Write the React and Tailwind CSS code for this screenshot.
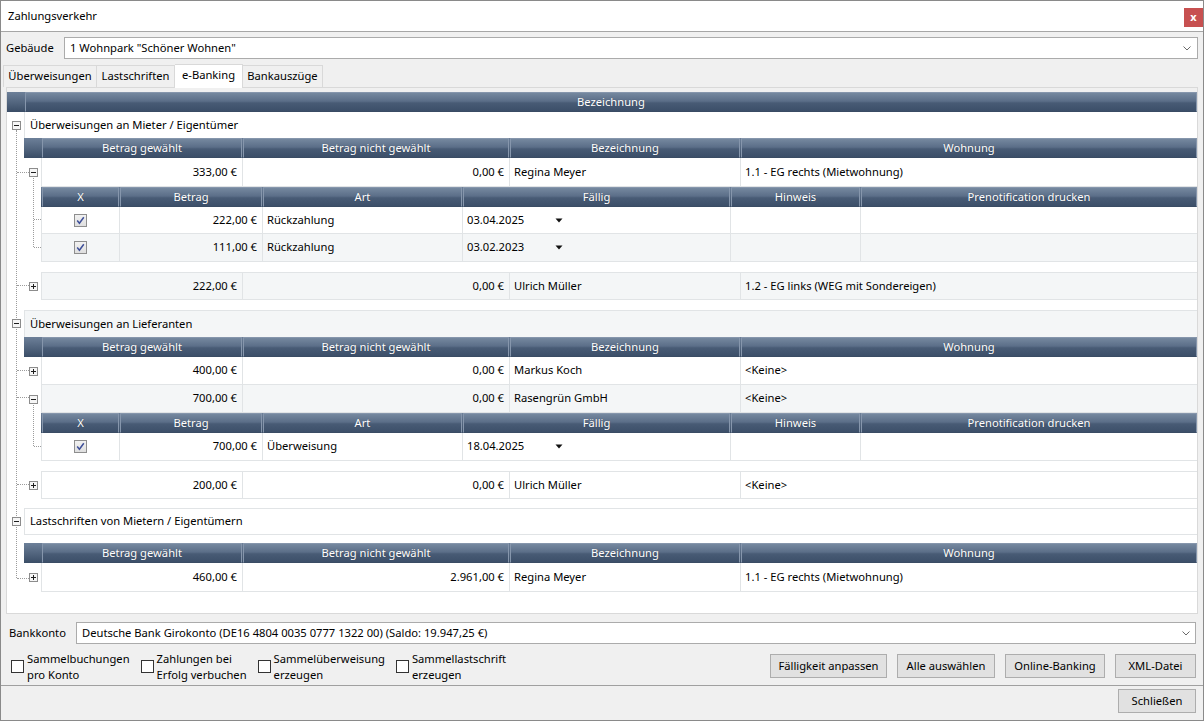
import React from "react";

const BORDER = "border-[#e1e4e6]";

const Exp = ({ plus }) => (
  <svg width="9" height="9" className="relative z-10 block">
    <rect x="0.5" y="0.5" width="8" height="8" fill="#f6f6f6" stroke="#8c8c8c" />
    <path d="M2 4.5h5" stroke="#1e1e1e" />
    {plus && <path d="M4.5 2v5" stroke="#1e1e1e" />}
  </svg>
);

const Check = () => (
  <svg width="13" height="13" className="block">
    <defs>
      <linearGradient id="cbg" x1="0" y1="0" x2="0" y2="1">
        <stop offset="0" stopColor="#f2f2f2" />
        <stop offset="1" stopColor="#dedede" />
      </linearGradient>
    </defs>
    <rect x="0.5" y="0.5" width="12" height="12" fill="url(#cbg)" stroke="#8e8e8e" />
    <path d="M3.2 6.6 L5.4 9.2 L9.8 3.2" fill="none" stroke="#3e4f98" strokeWidth="1.5" />
  </svg>
);

const Tri = () => (
  <svg width="8" height="5" className="block">
    <path d="M0.5 0.5 H7.5 L4 4.5 Z" fill="#111" />
  </svg>
);

const Chevron = () => (
  <svg width="8" height="5" className="block">
    <path d="M0.5 0.5 L4 4 L7.5 0.5" fill="none" stroke="#6a6a6a" strokeWidth="1" />
  </svg>
);

const HCell = ({ children, className = "" }) => (
  <div
    className={`ml-px flex items-center justify-center overflow-hidden whitespace-nowrap border border-[#8696ac] border-b-[#3a4c64] bg-[linear-gradient(to_bottom,#75889f_0%,#5b6e88_45%,#485b75_55%,#3c4f69_100%)] text-white [text-shadow:0_0_1px_rgba(0,0,0,0.35)] ${className}`}
  >
    {children}
  </div>
);

const BAR = "bg-[linear-gradient(to_bottom,#6d8099,#3a4d66)]";

const SectionHead = () => (
  <div className={`flex h-[20px] ${BAR}`}>
    <div className="w-[17px]" />
    <div className="flex-1 grid grid-cols-[201px_267px_231px_1fr]">
      <HCell>Betrag gewählt</HCell>
      <HCell>Betrag nicht gewählt</HCell>
      <HCell>Bezeichnung</HCell>
      <HCell>Wohnung</HCell>
    </div>
  </div>
);

const DetailHead = () => (
  <div className={`grid grid-cols-[78px_143px_200px_268px_130px_1fr] h-[20px] ${BAR}`}>
    <HCell>X</HCell>
    <HCell>Betrag</HCell>
    <HCell>Art</HCell>
    <HCell>Fällig</HCell>
    <HCell>Hinweis</HCell>
    <HCell>Prenotification drucken</HCell>
  </div>
);

const DataRow = ({ plus, a, b, name, wohnung, alt, top, h }) => (
  <div className={`flex ${h}`}>
    <div className="w-[17px] flex items-center justify-center pl-px">
      <Exp plus={plus} />
    </div>
    <div
      className={`flex-1 grid grid-cols-[201px_267px_231px_1fr] border-l border-b ${BORDER} ${top ? "border-t" : ""} ${alt ? "bg-[#f4f6f7]" : "bg-white"}`}
    >
      <div className={`border-r ${BORDER} flex items-center justify-end pr-[5px]`}>{a}</div>
      <div className={`border-r ${BORDER} flex items-center justify-end pr-[5px]`}>{b}</div>
      <div className={`border-r ${BORDER} flex items-center pl-[4px]`}>{name}</div>
      <div className="flex items-center pl-[4px]">{wohnung}</div>
    </div>
  </div>
);

const DetailRow = ({ amount, art, date, alt, h }) => (
  <div
    className={`grid grid-cols-[78px_143px_200px_268px_130px_1fr] border-l border-b ${BORDER} ${alt ? "bg-[#f4f6f7]" : "bg-white"} ${h}`}
  >
    <div className={`border-r ${BORDER} flex items-center justify-center`}>
      <Check />
    </div>
    <div className={`border-r ${BORDER} flex items-center justify-end pr-[5px]`}>{amount}</div>
    <div className={`border-r ${BORDER} flex items-center pl-[4px]`}>{art}</div>
    <div className={`border-r ${BORDER} flex items-center pl-[4px]`}>
      <span className="w-[88px]">{date}</span>
      <Tri />
    </div>
    <div className={`border-r ${BORDER}`} />
    <div />
  </div>
);

const GroupRow = ({ title, cls }) => (
  <div className={`flex ${cls}`}>
    <div className="w-[17px] flex items-center justify-center pl-px bg-white">
      <Exp />
    </div>
    <div className={`flex-1 flex items-center pl-[5px] ${BORDER}`}>{title}</div>
  </div>
);

const VLine = ({ cls }) => <div className={`absolute w-0 border-l border-dotted border-[#9c9c9c] ${cls}`} />;
const HLine = ({ cls }) => <div className={`absolute h-0 border-t border-dotted border-[#9c9c9c] ${cls}`} />;

const Cb = ({ l1, l2 }) => (
  <div className="flex items-start gap-[3px]">
    <div className="mt-[9px] w-[13px] h-[13px] border border-[#333333] bg-white shrink-0" />
    <div className="leading-[16px] whitespace-nowrap">
      {l1}
      <br />
      {l2}
    </div>
  </div>
);

const Btn = ({ children, w }) => (
  <div className={`h-[24px] ${w} flex items-center justify-center border border-[#adadad] bg-[#e1e1e1]`}>{children}</div>
);

export default function App() {
  return (
    <div className="w-[1204px] h-[721px] border border-[#8a8a8a] bg-[#f0f0f0] flex flex-col text-[11.2px] text-black font-['Segoe_UI','Noto_Sans',sans-serif] overflow-hidden">
      {/* Title bar */}
      <div className="h-[31px] shrink-0 bg-white border-b border-[#a6a6a6] flex items-start justify-between">
        <div className="pl-[7px] h-[30px] flex items-center">Zahlungsverkehr</div>
        <div className="mt-[7px] w-[19px] h-[19px] bg-[#c75050] flex items-center justify-center text-white text-[11px] font-bold leading-none pb-[2px]">
          x
        </div>
      </div>

      {/* Gebäude */}
      <div className="h-[32px] shrink-0 pt-[5px] pl-[5px] pr-[5px] flex">
        <div className="w-[58px] h-[22px] flex items-center">Gebäude</div>
        <div className="flex-1 h-[22px] border border-[#ababab] bg-white flex items-center justify-between pl-[5px] pr-[6px]">
          <span>1 Wohnpark "Schöner Wohnen"</span>
          <Chevron />
        </div>
      </div>

      {/* Tabs */}
      <div className="h-[23px] shrink-0 pl-[2px] flex items-end">
        <div className="w-[94px] h-[22px] border border-b-0 border-[#d9d9d9] flex items-center justify-center">Überweisungen</div>
        <div className="w-[78px] h-[22px] border border-l-0 border-b-0 border-[#d9d9d9] flex items-center justify-center">Lastschriften</div>
        <div className="relative z-10 -mb-px w-[68px] h-[24px] border border-l-0 border-b-0 border-[#d9d9d9] bg-white flex items-center justify-center pb-[2px]">
          e-Banking
        </div>
        <div className="w-[80px] h-[22px] border border-l-0 border-b-0 border-[#d9d9d9] flex items-center justify-center">Bankauszüge</div>
      </div>

      {/* Panel */}
      <div className="h-[527px] shrink-0 mx-[5px] border border-[#d9d9d9] flex flex-col">
        <div className="h-[4px] bg-[#f0f0f0] shrink-0" />
        <div className="relative flex-1 bg-white flex flex-col">
          {/* tree lines */}
          <VLine cls="left-[9px] top-[38px] h-[448px]" />
          <HLine cls="left-[10px] w-[12px] top-[80px]" />
          <HLine cls="left-[10px] w-[12px] top-[193px]" />
          <HLine cls="left-[10px] w-[12px] top-[278px]" />
          <HLine cls="left-[10px] w-[12px] top-[305px]" />
          <HLine cls="left-[10px] w-[12px] top-[392px]" />
          <HLine cls="left-[10px] w-[12px] top-[486px]" />
          <VLine cls="left-[26px] top-[86px] h-[69px]" />
          <HLine cls="left-[27px] w-[7px] top-[127px]" />
          <HLine cls="left-[27px] w-[7px] top-[155px]" />
          <VLine cls="left-[26px] top-[311px] h-[43px]" />
          <HLine cls="left-[27px] w-[7px] top-[354px]" />

          {/* top header */}
          <div className={`flex h-[20px] shrink-0 ${BAR}`}>
            <div className="w-[17px]" />
            <HCell className="flex-1">Bezeichnung</HCell>
          </div>

          {/* Group 1 */}
          <GroupRow title="Überweisungen an Mieter / Eigentümer" cls="h-[26px] [&>div:last-child]:border-l" />
          <div className="ml-[17px] flex flex-col">
            <SectionHead />
            <DataRow a="333,00 €" b="0,00 €" name="Regina Meyer" wohnung="1.1 - EG rechts (Mietwohnung)" h="h-[29px]" />
            <div className="ml-[17px] flex flex-col">
              <DetailHead />
              <DetailRow amount="222,00 €" art="Rückzahlung" date="03.04.2025" h="h-[27px]" />
              <DetailRow amount="111,00 €" art="Rückzahlung" date="03.02.2023" alt h="h-[28px]" />
            </div>
            <div className="h-[10px]" />
            <DataRow plus a="222,00 €" b="0,00 €" name="Ulrich Müller" wohnung="1.2 - EG links (WEG mit Sondereigen)" alt top h="h-[28px]" />
            <div className="h-[10px]" />
          </div>

          {/* Group 2 */}
          <GroupRow
            title="Überweisungen an Lieferanten"
            cls="h-[27px] [&>div:last-child]:bg-[#f4f6f7] [&>div:last-child]:border-l [&>div:last-child]:border-t"
          />
          <div className="ml-[17px] flex flex-col">
            <SectionHead />
            <DataRow plus a="400,00 €" b="0,00 €" name="Markus Koch" wohnung="<Keine>" h="h-[28px]" />
            <DataRow a="700,00 €" b="0,00 €" name="Rasengrün GmbH" wohnung="<Keine>" alt h="h-[28px]" />
            <div className="ml-[17px] flex flex-col">
              <DetailHead />
              <DetailRow amount="700,00 €" art="Überweisung" date="18.04.2025" h="h-[28px]" />
            </div>
            <div className="h-[10px]" />
            <DataRow plus a="200,00 €" b="0,00 €" name="Ulrich Müller" wohnung="<Keine>" top h="h-[28px]" />
            <div className="h-[9px]" />
          </div>

          {/* Group 3 */}
          <GroupRow
            title="Lastschriften von Mietern / Eigentümern"
            cls="h-[27px] [&>div:last-child]:border [&>div:last-child]:border-r-0"
          />
          <div className="ml-[17px] flex flex-col">
            <div className="h-[8px]" />
            <SectionHead />
            <DataRow plus a="460,00 €" b="2.961,00 €" name="Regina Meyer" wohnung="1.1 - EG rechts (Mietwohnung)" h="h-[29px]" />
          </div>
        </div>
      </div>

      {/* Bankkonto */}
      <div className="h-[30px] shrink-0 pt-[8px] pl-[8px] pr-[7px] flex">
        <div className="w-[67px] h-[22px] flex items-center">Bankkonto</div>
        <div className="flex-1 h-[22px] border border-[#ababab] bg-white flex items-center justify-between pl-[5px] pr-[5px]">
          <span>Deutsche Bank Girokonto (DE16 4804 0035 0777 1322 00) (Saldo: 19.947,25 €)</span>
          <Chevron />
        </div>
      </div>

      {/* Options + buttons */}
      <div className="h-[41px] shrink-0 flex items-start pl-[10px] pr-[7px]">
        <div className="flex gap-[11px] pt-[7px]">
          <Cb l1="Sammelbuchungen" l2="pro Konto" />
          <Cb l1="Zahlungen bei" l2="Erfolg verbuchen" />
          <Cb l1="Sammelüberweisung" l2="erzeugen" />
          <Cb l1="Sammellastschrift" l2="erzeugen" />
        </div>
        <div className="ml-auto mt-[10px] flex gap-[10px]">
          <Btn w="w-[117px]">Fälligkeit anpassen</Btn>
          <Btn w="w-[98px]">Alle auswählen</Btn>
          <Btn w="w-[100px]">Online-Banking</Btn>
          <Btn w="w-[81px]">XML-Datei</Btn>
        </div>
      </div>

      {/* Footer */}
      <div className="h-[35px] shrink-0 border-t border-[#a0a0a0] flex justify-end pt-[3px] pr-[7px]">
        <Btn w="w-[78px]">Schließen</Btn>
      </div>
    </div>
  );
}
